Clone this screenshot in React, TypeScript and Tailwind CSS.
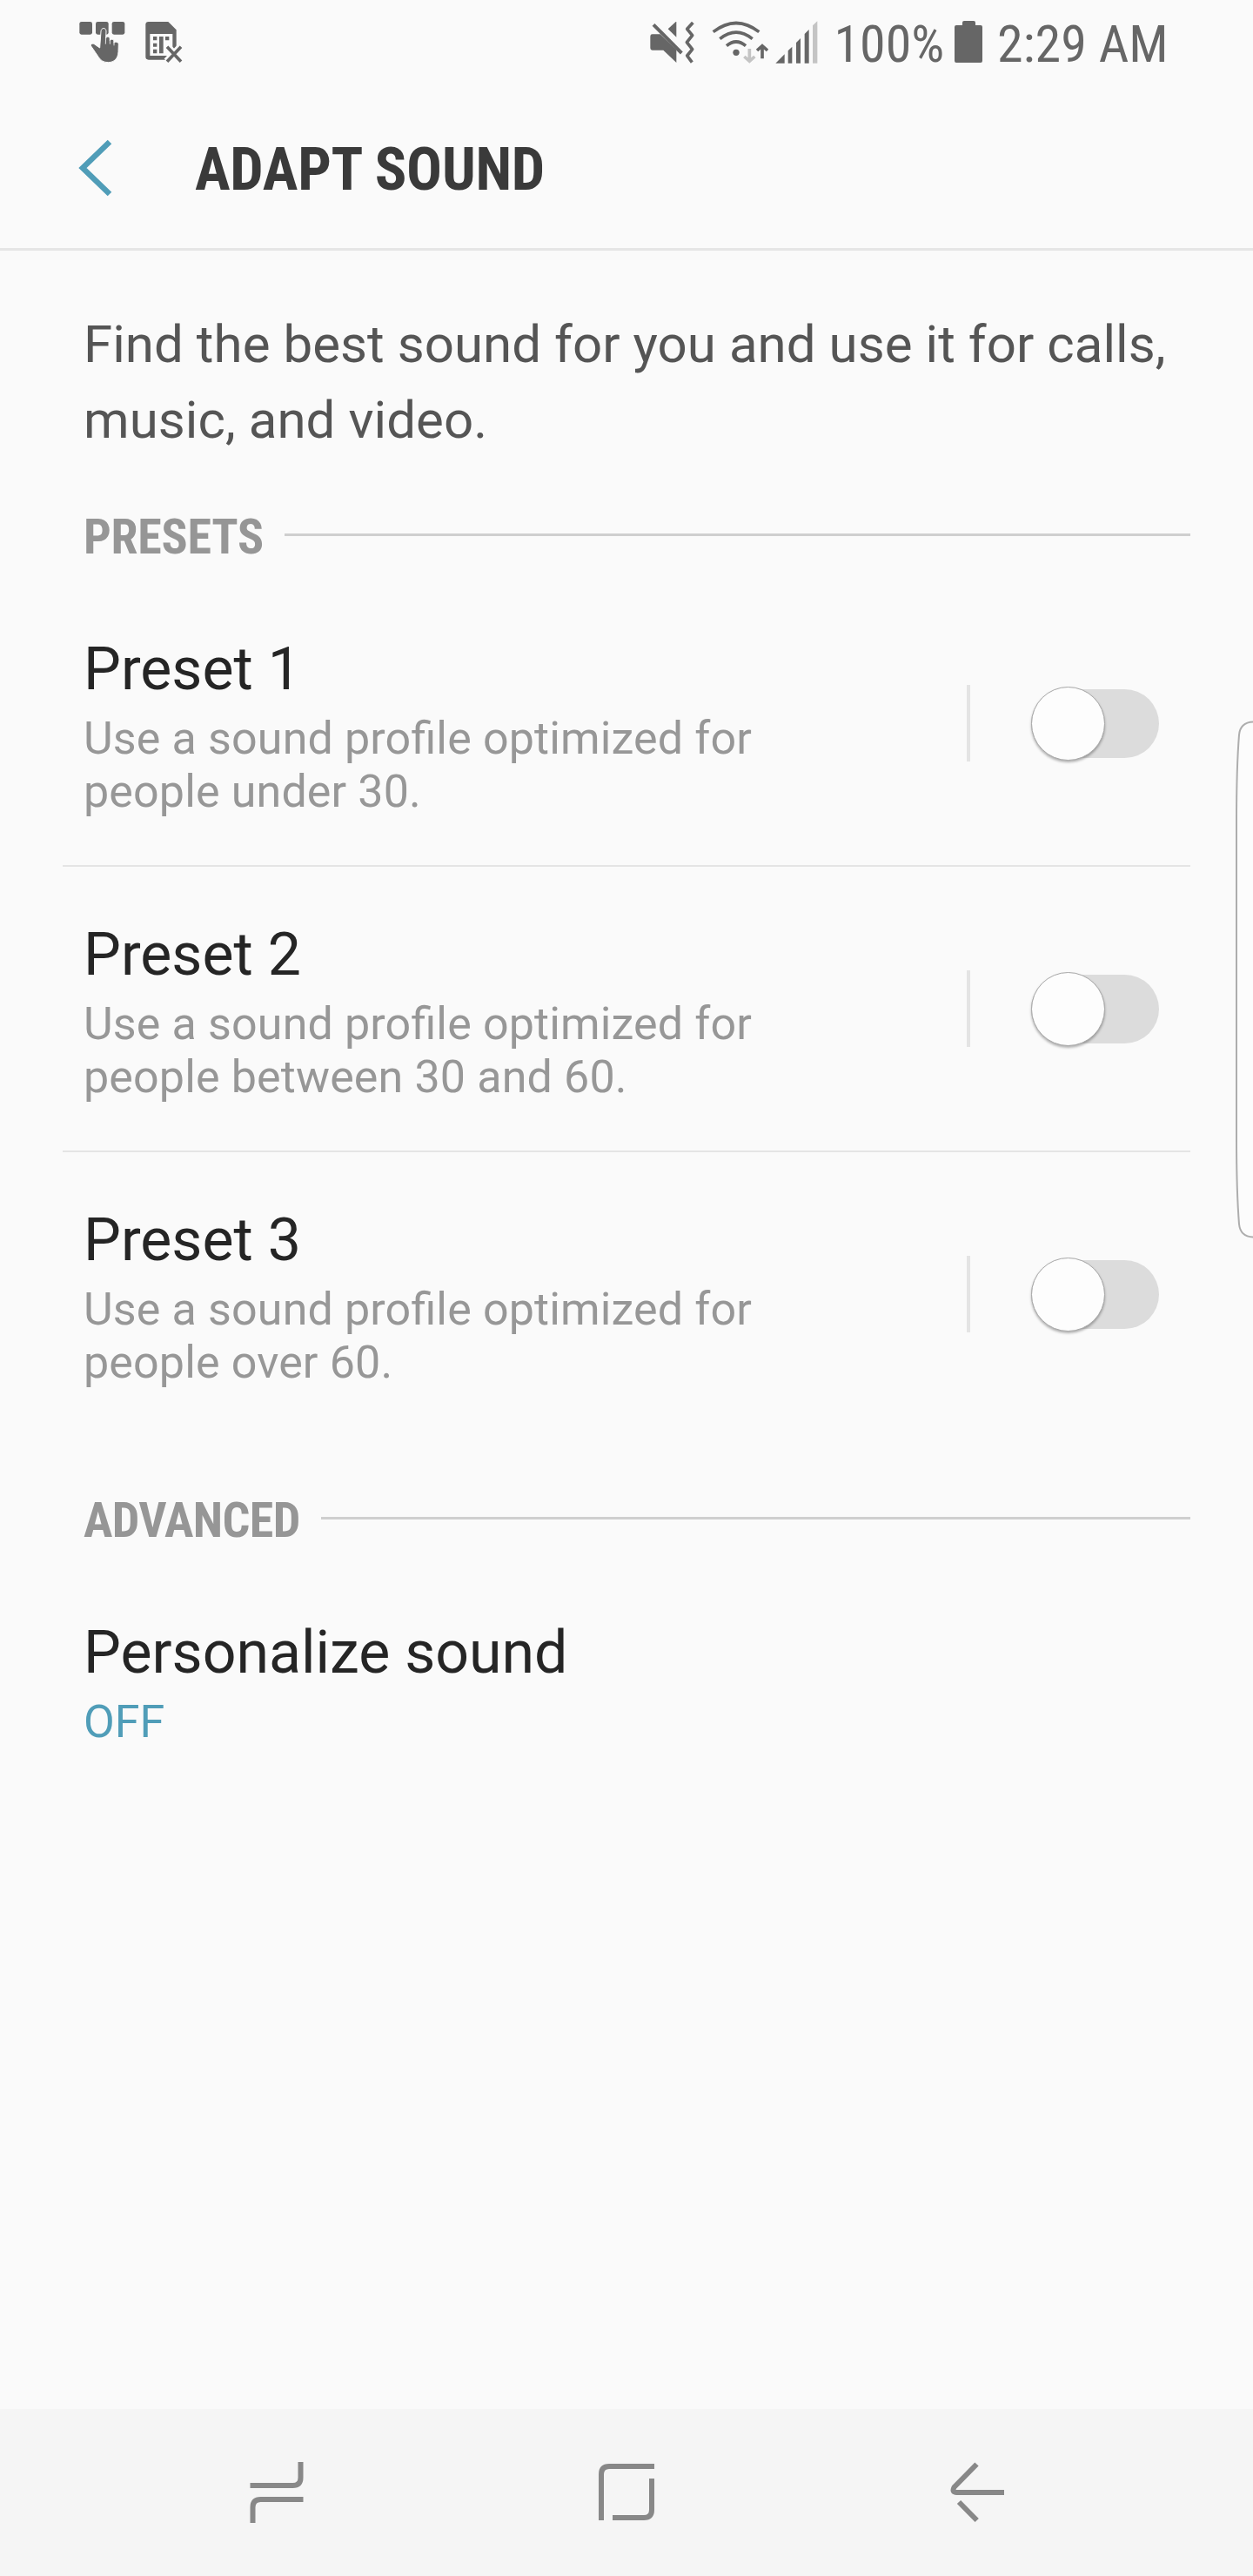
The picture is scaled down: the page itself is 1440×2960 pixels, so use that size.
import React, { useState } from 'react';

interface Preset {
  title: string;
  summary: string[];
}

const presets: Preset[] = [
  { title: 'Preset 1', summary: ['Use a sound profile optimized for', 'people under 30.'] },
  { title: 'Preset 2', summary: ['Use a sound profile optimized for', 'people between 30 and 60.'] },
  { title: 'Preset 3', summary: ['Use a sound profile optimized for', 'people over 60.'] },
];

const TouchIcon: React.FC = () => (
  <svg className="mb-[4px] h-[50px] w-[53px]" viewBox="62 70 159 150" fill="#666666">
    <rect x="63" y="73" width="44" height="44" rx="7" />
    <rect x="119" y="73" width="44" height="44" rx="7" />
    <rect x="175" y="73" width="44" height="44" rx="7" />
    <path
      d="M137 106c1-14 18-14 18 0l-1 23c3-7 14-5 14 3v6c3-7 14-5 14 2v6c3-6 16-4 16 4l-1 27c-1 22-14 36-35 36-16 0-25-6-33-18l-26-38c-3-6 4-11 11-7l19 13z"
      stroke="#fafafa"
      strokeWidth="3"
    />
    <path d="M153 150l1-24M168 150v-20M182 155v-18" stroke="#fafafa" strokeWidth="2.5" fill="none" />
  </svg>
);

const SimIcon: React.FC = () => (
  <svg className="mb-[4px] h-[50px] w-[43px]" viewBox="290 70 129 150">
    <path d="M301 73h68l28 28v103h-96q-10 0-10-10v-111q0-10 10-10z" fill="#666666" />
    <path d="M306 115h78v75h-78z" fill="#fafafa" />
    <path d="M317 124h13v13h-13zM338 124h14v58h-14zM359 124h13v13h-13zM317 147h13v12h-13zM317 168h13v14h-13z" fill="#666666" />
    <path d="M365 160l48 50M413 160l-48 50" stroke="#fafafa" strokeWidth="28" />
    <path d="M365 159l48 51M413 159l-48 51" stroke="#666666" strokeWidth="11" />
  </svg>
);

const MuteVibrateIcon: React.FC = () => (
  <svg className="mb-[4px] h-[50px] w-[52px]" viewBox="50 70 156 150" fill="#666666">
    <path d="M58 116h27l56 54v44l-45-43h-38q-7 0-7-7v-41q0-7 7-7z" />
    <path d="M112 98l27-25h2v53z" />
    <path d="M69 76l98 96" stroke="#fafafa" strokeWidth="12" />
    <path d="M62 83l97 98" stroke="#666666" strokeWidth="12" />
    <path d="M198 76l-20 22 18 22-19 24 19 24-18 22 17 23" fill="none" stroke="#666666" strokeWidth="11" strokeLinejoin="round" />
  </svg>
);

const WifiIcon: React.FC = () => (
  <svg className="mb-[4px] h-[50px] w-[65px]" viewBox="263 70 195 150" fill="none" stroke="#666666" strokeWidth="11">
    <path d="M268 108q79-61 158 0M291 132q56-45 112 0M314 156q33-28 66 0" />
    <circle cx="347" cy="179" r="11" fill="#666666" stroke="none" />
    <path d="M393 166v43M375 193l18 16 18-16" stroke="#c4c4c4" />
    <path d="M437 200v-43M419 172l18-16 18 16" />
  </svg>
);

const SignalIcon: React.FC = () => (
  <svg className="mb-[4px] h-[50px] w-[49px]" viewBox="481 70 147 150" fill="#666666">
    <path d="M482 216l31-31v31zM525 173l14-14v57h-14zM553 145l15-15v86h-15zM582 115l15-15v116h-15z" />
    <path d="M610 86l16-15v145h-16z" fill="#c4c4c4" />
  </svg>
);

const BatteryIcon: React.FC = () => (
  <svg className="mb-[5px] h-[50px] w-8" viewBox="0 0 32 50" fill="#666666">
    <path d="M11 1h11q2 0 2 2v3h6q2 0 2 2v39q0 2-2 2h-28q-2 0-2-2v-39q0-2 2-2h7v-3q0-2 2-2z" />
  </svg>
);

const StatusBar: React.FC = () => (
  <div className="flex h-24 items-center pt-[5px] pl-[90.5px] font-['Roboto_Condensed',Roboto,sans-serif] text-[60px] leading-[70px] text-[#666666] font-stretch-[75%]">
    <TouchIcon />
    <div className="ml-[23px]"><SimIcon /></div>
    <div className="ml-[537px]"><MuteVibrateIcon /></div>
    <div className="ml-[19px]"><WifiIcon /></div>
    <div className="ml-[8px]"><SignalIcon /></div>
    <span className="ml-[19px] w-[128px] whitespace-nowrap">100%</span>
    <div className="ml-[10.5px]"><BatteryIcon /></div>
    <span className="ml-[17px] whitespace-nowrap">2:29 AM</span>
  </div>
);

const SectionHeader: React.FC<{ label: string; tracking: string }> = ({ label, tracking }) => (
  <div className="flex h-[102px] items-center pr-[72px] pl-24">
    <h2 className={`font-['Roboto_Condensed',Roboto,sans-serif] text-[56px] leading-[66px] font-bold text-[#969696] font-stretch-[75%] ${tracking}`}>
      {label}
    </h2>
    <div className="-mt-[5px] ml-6 h-[3px] flex-1 bg-[#cfcfcf]" />
  </div>
);

const Toggle: React.FC<{ checked: boolean; onChange: () => void }> = ({ checked, onChange }) => (
  <button
    role="switch"
    aria-checked={checked}
    onClick={onChange}
    className={`flex h-[79px] w-[147px] items-center rounded-full ${checked ? 'justify-end bg-[#8cc5d8]' : 'bg-[#dcdcdc]'}`}
  >
    <span className="size-[85px] shrink-0 rounded-full border border-[#a8a8a8] bg-[#fdfdfd] shadow-[0_2px_3px_rgba(0,0,0,0.3)]" />
  </button>
);

const NavigationBar: React.FC = () => (
  <div className="flex h-48 items-center bg-[#f5f5f5] pl-[287px]">
    <svg className="h-[72px] w-[62px]" viewBox="287 2828 62 72" fill="none" stroke="#888888" strokeWidth="6">
      <path d="M287.500 2856h49q9 0 9-9v-18M348.500 2872h-49q-9 0-9 9v18" />
    </svg>
    <svg className="ml-[339px] h-[72px] w-[64px]" viewBox="688 2828 64 72" fill="none" stroke="#888888" strokeWidth="6">
      <path d="M691 2896v-53q0-9 9-9h52M749 2848v36q0 9-9 9h-36" />
    </svg>
    <svg className="ml-[340px] h-[72px] w-[62px]" viewBox="1092 2828 62 72" fill="none" stroke="#888888" strokeWidth="6">
      <path d="M1122.500 2831.500l-26 26.500q-3 6 3 6h54.500M1102 2875l20.700 21" />
    </svg>
  </div>
);

export default function App() {
  const [enabled, setEnabled] = useState<boolean[]>([false, false, false]);

  const toggle = (index: number) => {
    setEnabled((prev) => prev.map((value, i) => (i === index ? !value : value)));
  };

  return (
    <div className="relative flex h-[2960px] w-[1440px] flex-col overflow-hidden bg-[#fafafa] font-[Roboto,sans-serif]">
      <StatusBar />

      <header className="flex h-48 items-center border-b-[3px] border-[#e5e5e5] pt-2 pl-[90px]">
        <svg className="-mt-1 h-[66px] w-10" viewBox="90 159 40 66" fill="none" stroke="#509db8" strokeWidth="6.5">
          <path d="M126 162l-31 30 31 30" />
        </svg>
        <h1 className="ml-[94px] font-['Roboto_Condensed',Roboto,sans-serif] text-[68px] leading-[80px] font-bold tracking-[-0.25px] text-[#3a3a3a] font-stretch-[75%]">
          ADAPT SOUND
        </h1>
      </header>

      <p className="pt-16 pl-24 text-[60px] leading-[87px] tracking-[0.05px] whitespace-nowrap text-[#555555]">
        Find the best sound for you and use it for calls,
        <br />
        music, and video.
      </p>

      <div className="pt-10">
        <SectionHeader label="PRESETS" tracking="tracking-[-0.25px]" />
      </div>
      {presets.map((preset, index) => (
        <div
          key={preset.title}
          className={`mr-[72px] ml-[72px] flex h-[328px] items-start border-b-2 pl-6 ${index < 2 ? 'border-[#e4e4e4]' : 'border-transparent'}`}
        >
          <div className="w-[1015px] pt-[61px]">
            <div className="text-[68px] leading-[80px] text-[#252525]">{preset.title}</div>
            <div className="mt-[9px] text-[52px] leading-[61px] tracking-[0.14px] text-[#979797] [font-feature-settings:'liga'_1]">
              {preset.summary.map((line) => (
                <div key={line}>{line}</div>
              ))}
            </div>
          </div>
          <div className="flex h-[326px] items-center">
            <div className="h-[88px] w-1 bg-[#e4e4e4]" />
            <div className="ml-[70px]">
              <Toggle checked={enabled[index]} onChange={() => toggle(index)} />
            </div>
          </div>
        </div>
      ))}

      <div className="pt-11">
        <SectionHeader label="ADVANCED" tracking="tracking-[-0.6px]" />
      </div>
      <div className="pt-[61px] pl-24">
        <div className="text-[68px] leading-[80px] text-[#252525]">Personalize sound</div>
        <div className="mt-[9px] text-[52px] leading-[61px] text-[#509db8]">OFF</div>
      </div>

      <div className="flex-1" />
      <NavigationBar />

      {/* Edge panel handle */}
      <svg className="absolute top-[826px] right-0 h-[600px] w-[22px]" viewBox="1418 826 22 600" fill="#fcfcfc" stroke="#adadad" strokeWidth="2">
        <path d="M1441 829.500c-10 0-16 5-17 15-2 25-3 50-3 100v362c0 50 1 75 3 100 1 10 7 15 17 15" />
      </svg>
    </div>
  );
}
